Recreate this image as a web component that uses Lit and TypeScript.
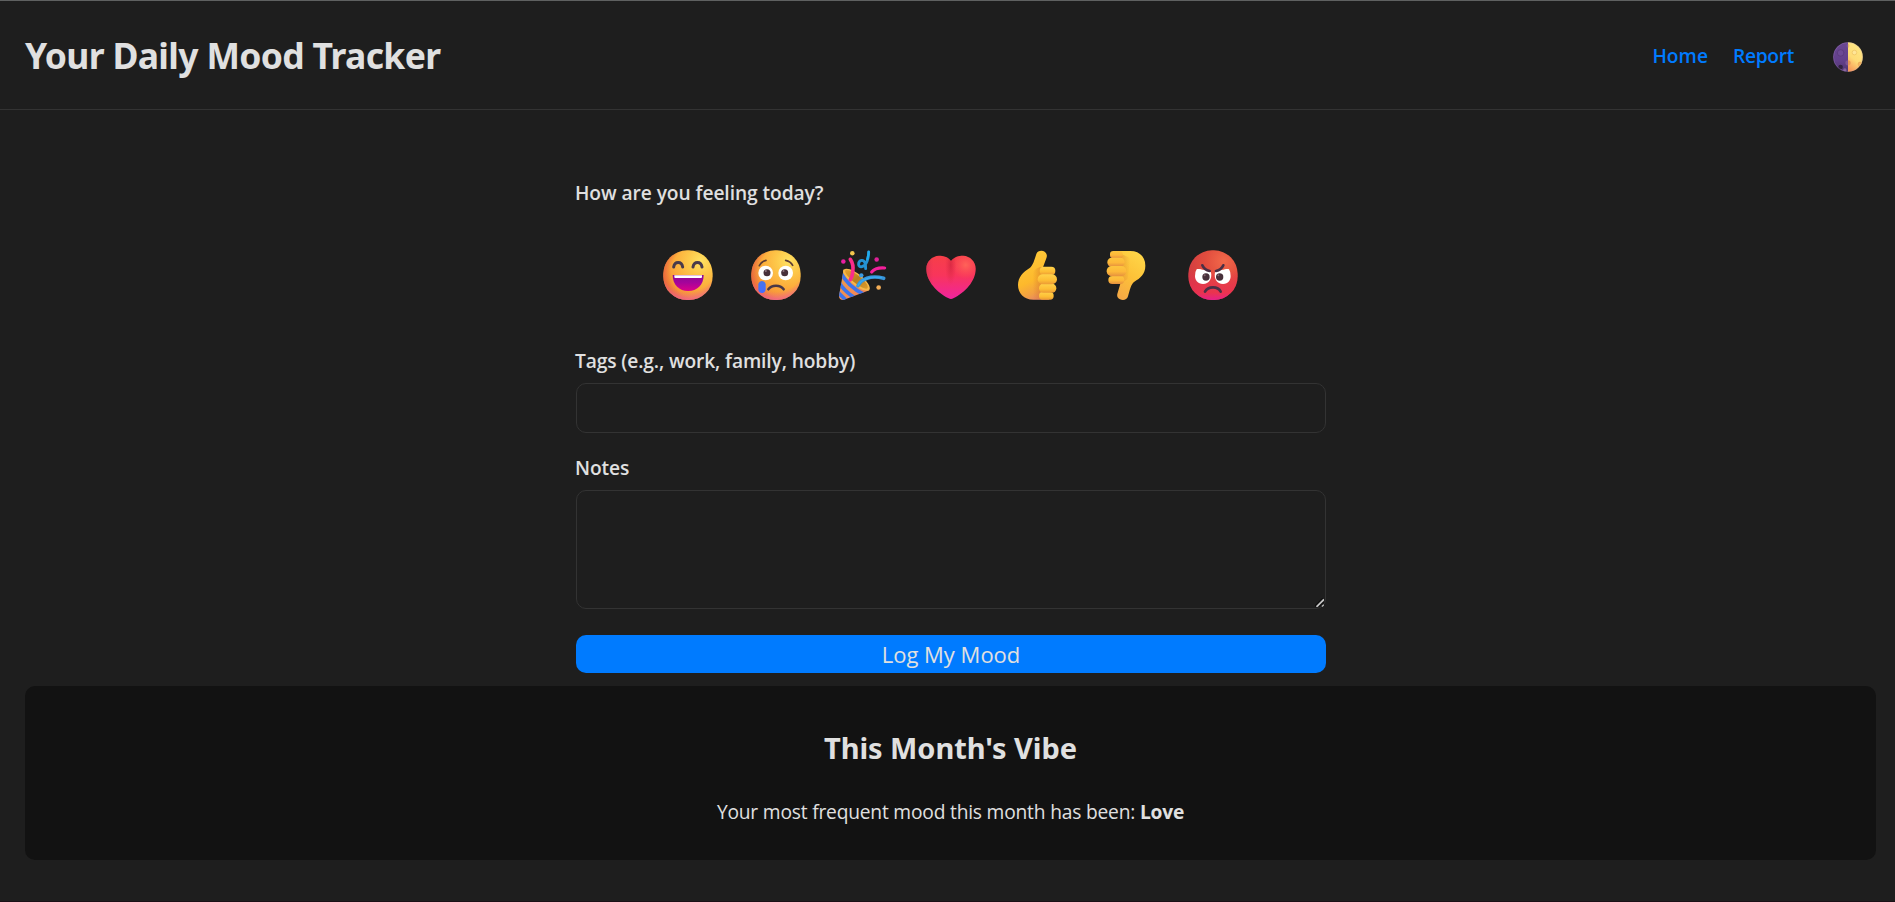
import { LitElement, html, svg, css } from "lit";
import { customElement } from "lit/decorators.js";

const faceBase = (id: string, cx: number) => svg`
  <defs>
    <radialGradient id="${id}-a" gradientUnits="userSpaceOnUse" cx="${cx + 38}" cy="78" r="125">
      <stop offset="0" stop-color="#ffe262"/><stop offset=".3" stop-color="#fdc84a"/>
      <stop offset=".62" stop-color="#fcae3c"/><stop offset="1" stop-color="#f48a38"/>
    </radialGradient>
    <radialGradient id="${id}-b" gradientUnits="userSpaceOnUse" cx="${cx}" cy="82" r="122">
      <stop offset=".72" stop-color="#f2628a" stop-opacity="0"/><stop offset="1" stop-color="#ee5fa6"/>
    </radialGradient>
    <radialGradient id="${id}-c" gradientUnits="userSpaceOnUse" cx="${cx + 26}" cy="112" r="104">
      <stop offset=".74" stop-color="#ea6a3c" stop-opacity="0"/><stop offset="1" stop-color="#e8623f"/>
    </radialGradient>
  </defs>
  <rect x="${cx - 74}" y="46" width="148" height="149" rx="71" fill="url(#${id}-a)"/>
  <rect x="${cx - 74}" y="46" width="148" height="149" rx="71" fill="url(#${id}-c)"/>
  <rect x="${cx - 74}" y="46" width="148" height="149" rx="71" fill="url(#${id}-b)"/>`;

const happy = svg`<svg viewBox="40 45 150 150">
  ${faceBase("hp", 115)}
  <defs><linearGradient id="hp-m" x1="0" y1="0" x2="0" y2="1"><stop offset="0" stop-color="#8a0b91"/><stop offset=".45" stop-color="#a3049b"/><stop offset="1" stop-color="#dc008a"/></linearGradient></defs>
  <g fill="none" stroke="#493a4b" stroke-width="9" stroke-linecap="round">
    <path d="M72 96C75 78 96 78 99 96"/><path d="M130 96C133 78 154 78 157 96"/>
  </g>
  <path d="M69 120H162C162 150 142 168 115.500 168S69 150 69 120Z" fill="url(#hp-m)"/>
  <path d="M74 120.500H157V126Q157 129 154 129H77Q74 129 74 126Z" fill="#fff"/>
</svg>`;

const sad = svg`<svg viewBox="302 45 150 150">
  ${faceBase("sd", 377)}
  <defs><linearGradient id="sd-t" x1="0" y1="0" x2="0" y2="1"><stop offset="0" stop-color="#4775e8"/><stop offset="1" stop-color="#456bff"/></linearGradient></defs>
  <g fill="none" stroke="#5d3d35" stroke-width="5" stroke-linecap="round"><path d="M327 92Q333 79 347 76"/><path d="M406 76Q421 79 427 91"/></g>
  <circle cx="346" cy="114" r="22" fill="#fff"/><circle cx="406" cy="114" r="22" fill="#fff"/>
  <circle cx="350" cy="113" r="10.500" fill="#47303a"/><circle cx="403" cy="113" r="10.500" fill="#47303a"/>
  <circle cx="346.500" cy="108" r="3" fill="#8f7680"/><circle cx="399.500" cy="108" r="3" fill="#8f7680"/>
  <path d="M354 163Q362 152 377 152T400 163" fill="none" stroke="#493847" stroke-width="7.500" stroke-linecap="round"/>
  <path d="M324 148C324 142 330 138 335 138S346 142 346 148V163C346 170 341 174 335 174S324 170 324 163Z" fill="url(#sd-t)"/>
</svg>`;

const party = svg`<svg viewBox="54 45 150 150">
  <defs>
    <linearGradient id="pt-c" x1="0" y1="0" x2="1" y2="1"><stop offset="0" stop-color="#e8a24a"/><stop offset=".6" stop-color="#f28a52"/><stop offset="1" stop-color="#dd7b66"/></linearGradient>
    <linearGradient id="pt-i" x1="0" y1="0" x2="1" y2="1"><stop offset="0" stop-color="#e8a32c"/><stop offset=".5" stop-color="#b97d20"/><stop offset="1" stop-color="#dd9c2c"/></linearGradient>
    <clipPath id="pt-k"><path d="M71 103L57 183Q57 195 70 195L148 166Z"/></clipPath>
  </defs>
  <path d="M71 103L57 183Q57 195 70 195L148 166Z" fill="url(#pt-c)"/>
  <g clip-path="url(#pt-k)" fill="none" stroke="#3b74ec" stroke-width="11">
    <path d="M62 112Q84 155 132 178"/><path d="M54 137Q71 169 108 191"/><path d="M52 170Q62 180 82 200"/>
  </g>
  <path d="M71 104C80 96 105 106 127 126S153 161 147 166S116 162 95 143S65 109 71 104Z" fill="#f6b84b"/>
  <path d="M76 106C85 102 104 111 123 128S146 155 142 160S115 153 98 138S72 110 76 106Z" fill="url(#pt-i)"/>
  <path d="M91 73Q102 88 98 112Q97 125 91 134" fill="none" stroke="#fb2c8b" stroke-width="11" stroke-linecap="round"/>
  <path d="M114 152C123 133 151 119 191 130" fill="none" stroke="#3795da" stroke-width="11" stroke-linecap="round"/>
  <path d="M114 152C123 133 151 123 184 128" fill="none" stroke="#3aaaf0" stroke-width="4" stroke-linecap="round"/>
  <path d="M155 111Q166 97 194 99" fill="none" stroke="#f3209b" stroke-width="9.500" stroke-linecap="round"/>
  <path d="M146 51C146 70 140 91 126 95C112 98 113 78 125 76C136 75 137 90 137 101" fill="none" stroke="#2493d5" stroke-width="8.500" stroke-linecap="round" stroke-linejoin="round"/>
  <path d="M146 51Q145 63 142 72" fill="none" stroke="#20aced" stroke-width="7" stroke-linecap="round"/>
  <circle cx="97" cy="54.500" r="6.800" fill="#f4c64d"/><circle cx="70" cy="79.500" r="6.800" fill="#e81fa0"/>
  <circle cx="170" cy="73.500" r="6.800" fill="#df2098"/><circle cx="124" cy="121" r="6.500" fill="#3b9ae2"/>
  <circle cx="176" cy="157.500" r="7" fill="#f4ae57"/>
</svg>`;

const heartPath = "M392 78C382 64 368 62 356 62C335 63 318 79 318 101C318 139 350 172 385 190Q392 194 399 190C434 172 466 139 466 101C466 79 449 63 428 62C415 62 402 65 392 78Z";
const love = svg`<svg viewBox="317 45 150 150">
  <defs>
    <linearGradient id="lv-a" x1="0" y1="0" x2="0" y2="1"><stop offset="0" stop-color="#f63f48"/><stop offset=".45" stop-color="#f8355b"/><stop offset="1" stop-color="#f0249f"/></linearGradient>
    <radialGradient id="lv-b" gradientUnits="userSpaceOnUse" cx="436" cy="90" r="42"><stop offset="0" stop-color="#ff6358"/><stop offset="1" stop-color="#ff5058" stop-opacity="0"/></radialGradient>
    <radialGradient id="lv-c" gradientUnits="userSpaceOnUse" cx="0" cy="0" r="1" gradientTransform="translate(391 90) scale(17 60)"><stop offset="0" stop-color="#c8203c" stop-opacity=".6"/><stop offset="1" stop-color="#d8243f" stop-opacity="0"/></radialGradient>
    <linearGradient id="lv-d" x1="0" y1="0" x2="1" y2="0"><stop offset="0" stop-color="#c9304e" stop-opacity=".55"/><stop offset=".14" stop-color="#d93050" stop-opacity="0"/></linearGradient>
  </defs>
  ${["a", "b", "c", "d"].map((k) => svg`<path d="${heartPath}" fill="url(#lv-${k})"/>`)}
</svg>`;

const like = svg`<svg viewBox="39 45 150 150">
  <defs>
    <linearGradient id="lk-a" x1=".3" y1="0" x2=".6" y2="1"><stop offset="0" stop-color="#ffcb3a"/><stop offset=".6" stop-color="#fdb92c"/><stop offset=".85" stop-color="#f2a043"/><stop offset="1" stop-color="#e88765"/></linearGradient>
    <linearGradient id="lk-f" x1="0" y1="0" x2="0" y2="1"><stop offset="0" stop-color="#ffd24a"/><stop offset=".6" stop-color="#fdbd35"/><stop offset="1" stop-color="#eb9a35"/></linearGradient>
    <linearGradient id="lk-s" x1="0" y1="0" x2="1" y2="0"><stop offset="0" stop-color="#d87b28" stop-opacity="0"/><stop offset="1" stop-color="#d87b28" stop-opacity=".65"/></linearGradient>
  </defs>
  <path d="M109 57C112 47 126 45 134 50C141 55 142 63 139 70L129 97L134 110L147 194H100C72 194 54 175 54 150C54 127 70 111 88 100C99 93 104 72 109 57Z" fill="url(#lk-a)"/>
  <path d="M98 112Q110 96 126 96L128 192H100Z" fill="url(#lk-s)"/>
  <rect x="119" y="95" width="47" height="25" rx="12" fill="url(#lk-f)"/>
  <rect x="117" y="171" width="44" height="23" rx="11" fill="url(#lk-f)"/>
  <rect x="117" y="146" width="52" height="27" rx="13" fill="url(#lk-f)"/>
  <rect x="113" y="118" width="58" height="30" rx="15" fill="url(#lk-f)"/>
</svg>`;

const dislike = svg`<svg viewBox="302 45 150 150">
  <defs>
    <linearGradient id="dl-a" x1=".8" y1="0" x2=".3" y2="1"><stop offset="0" stop-color="#ffd749"/><stop offset=".5" stop-color="#fdc238"/><stop offset="1" stop-color="#f6a945"/></linearGradient>
    <linearGradient id="dl-f" x1="0" y1="0" x2="0" y2="1"><stop offset="0" stop-color="#fdc53e"/><stop offset=".55" stop-color="#fdb83a"/><stop offset="1" stop-color="#e58f3e"/></linearGradient>
    <linearGradient id="dl-s" x1="0" y1="0" x2="1" y2="0"><stop offset="0" stop-color="#dd8a30" stop-opacity=".6"/><stop offset="1" stop-color="#dd8a30" stop-opacity="0"/></linearGradient>
  </defs>
  <path d="M340 48H390C418 48 435 66 435 92C435 117 420 129 402 140C392 147 388 166 383 184C380 195 368 197 359 193C350 188 349 181 352 173L360 146L352 134Z" fill="url(#dl-a)"/>
  <path d="M362 56L390 70L382 132L358 148Z" fill="url(#dl-s)"/>
  <rect x="329" y="48" width="38" height="22" rx="10" fill="url(#dl-f)"/>
  <rect x="324" y="123" width="48" height="24" rx="12" fill="url(#dl-f)"/>
  <rect x="321" y="68" width="52" height="27" rx="13" fill="url(#dl-f)"/>
  <rect x="319" y="93" width="59" height="31" rx="15" fill="url(#dl-f)"/>
</svg>`;

const angry = svg`<svg viewBox="564 45 150 150">
  <defs>
    <radialGradient id="an-a" gradientUnits="userSpaceOnUse" cx="672" cy="78" r="125"><stop offset="0" stop-color="#f2694a"/><stop offset=".45" stop-color="#e24d3e"/><stop offset="1" stop-color="#cf3842"/></radialGradient>
    <linearGradient id="an-b" x1="0" y1="0" x2="0" y2="1"><stop offset=".4" stop-color="#ee2c58" stop-opacity="0"/><stop offset=".85" stop-color="#ef3152" stop-opacity=".8"/><stop offset="1" stop-color="#e61f8c"/></linearGradient>
  </defs>
  <rect x="565" y="46" width="148" height="149" rx="71" fill="url(#an-a)"/>
  <rect x="565" y="46" width="148" height="149" rx="71" fill="url(#an-b)"/>
  <path d="M590 103C595 100 620 107 633 112C637 132 627 147 609 147C593 147 585 135 585 123Q585 110 590 103Z" fill="#fff"/>
  <path d="M687 103C682 100 657 107 645 112C641 132 651 147 669 147C685 147 692 135 692 123Q692 110 687 103Z" fill="#fff"/>
  <circle cx="618" cy="126" r="11" fill="#47303a"/><circle cx="659" cy="126" r="11" fill="#47303a"/>
  <circle cx="614" cy="121" r="3" fill="#80646e"/><circle cx="655" cy="121" r="3" fill="#80646e"/>
  <g fill="none" stroke="#493046" stroke-width="8" stroke-linecap="round"><path d="M607 91Q613 105 629 108"/><path d="M670 91Q664 105 648 108"/><path d="M615 170Q622 157 639 157T662 170"/></g>
</svg>`;

const moon = svg`<svg viewBox="609 125 91 91">
  <defs>
    <linearGradient id="mn-d" x1="0" y1="0" x2="0" y2="1"><stop offset="0" stop-color="#6a4792"/><stop offset=".6" stop-color="#63408c"/><stop offset="1" stop-color="#50356f"/></linearGradient>
    <linearGradient id="mn-l" x1=".7" y1="0" x2=".3" y2="1"><stop offset="0" stop-color="#ffe985"/><stop offset=".6" stop-color="#fedb76"/><stop offset="1" stop-color="#f79a59"/></linearGradient>
    <clipPath id="mn-k"><circle cx="654.500" cy="170.500" r="45"/></clipPath>
  </defs>
  <g clip-path="url(#mn-k)">
    <path d="M609 125H654.500V216H609Z" fill="url(#mn-d)"/><path d="M654.500 125H700V216H654.500Z" fill="url(#mn-l)"/>
    <circle cx="632" cy="158" r="10" fill="#6d4a95" stroke="#573776" stroke-width="2"/>
    <circle cx="632" cy="201" r="7" fill="#30213f"/><circle cx="645" cy="210" r="5" fill="#81609b"/>
    <path d="M654.500 130A7 7 0 0 1 654.500 143Z" fill="#e9ba67"/><path d="M654.500 130A7 7 0 0 0 654.500 143Z" fill="#7c5798"/>
    <path d="M654.500 180A8 8 0 0 1 654.500 196Z" fill="#e79a57"/><path d="M654.500 180A8 8 0 0 0 654.500 196Z" fill="#7d5495"/>
    <circle cx="674" cy="157" r="7" fill="#ffe698" stroke="#edc062" stroke-width="2"/>
    <circle cx="691" cy="192" r="6" fill="#f7b65d" stroke="#dd9a4e" stroke-width="1.500"/>
  </g>
  <circle cx="654.500" cy="170.500" r="44" fill="none" stroke="#b79acb" stroke-opacity=".35" stroke-width="2"/>
</svg>`;

const grip = svg`<svg viewBox="0 0 9 9">
  <path d="M0 8.500L8 .5" stroke="#0c0c0c" stroke-width="1.800"/>
  <path d="M1.500 8.800L9 1.300" stroke="#c4c4c4" stroke-width="1.900"/>
  <path d="M4 9L9 4" stroke="#111" stroke-width="1.200"/>
  <path d="M7 8.500L8.800 6.700" stroke="#b4b4b4" stroke-width="1.400"/>
</svg>`;

@customElement("app-root")
export class AppRoot extends LitElement {
  private moods = [
    ["Happy", happy], ["Sad", sad], ["Excited", party], ["Love", love],
    ["Good", like], ["Bad", dislike], ["Angry", angry],
  ] as const;

  static styles = css`
    :host {
      display: block; box-sizing: border-box; height: 902px; overflow: hidden;
      background: #1e1e1e; color: #e0e0e0;
      border-top: 1px solid #5f6161; border-bottom: 1px solid #1a1016;
      font: 400 19.2px/30px "Open Sans", "Noto Sans", sans-serif;
    }
    * { box-sizing: border-box; }
    svg { display: block; width: 100%; height: 100%; }
    button { border: 0; padding: 0; background: none; color: inherit; font: inherit; cursor: pointer; }
    .header {
      display: flex; align-items: center; justify-content: space-between;
      height: 109px; padding: 0 32px 0 25px; border-bottom: 1px solid #333;
    }
    .title { margin: 0; font: 700 35.5px/54px "Noto Sans", sans-serif; letter-spacing: -0.67px; }
    .nav { display: flex; align-items: center; }
    .link { color: #007bff; font-weight: 600; text-decoration: none; margin-right: 25px; padding-top: 2px; }
    .report { letter-spacing: -0.3px; margin-right: 39px; }
    .theme { width: 30px; height: 30px; margin-top: 4px; }
    .form { display: flex; flex-direction: column; width: 750px; margin: 68px 0 0 576px; }
    .label { font-weight: 600; letter-spacing: -0.07px; margin-left: -1px; }
    .tags { letter-spacing: -0.12px; }
    .moods { display: flex; justify-content: center; gap: 37.5px; margin: 42px 1px 46px 0; }
    .mood { width: 50px; height: 50px; }
    .field {
      display: block; width: 100%; padding: 12px; border: 1px solid #333;
      border-radius: 10px; background: #1e1e1e; color: inherit; font: inherit; outline: 0;
    }
    .input { height: 50px; margin: 7px 0 20px; }
    .notes { position: relative; margin: 7px 0 26px; }
    .area { height: 119px; resize: none; }
    .grip { position: absolute; right: 2px; bottom: 2px; width: 9px; height: 9px; pointer-events: none; }
    .submit { height: 38px; border-radius: 10px; background: #007bff; font-size: 22px; line-height: 38px; }
    .card {
      height: 174px; margin: 13px 19px 0 25px; padding-top: 42px; border-radius: 10px;
      background: #121212; text-align: center;
    }
    .subtitle { margin: 0 0 29px; font: 700 29px/40px "Noto Sans", sans-serif; letter-spacing: -0.05px; }
    .summary { margin: 0; letter-spacing: -0.19px; }
  `;

  render() {
    return html`
      <header class="header">
        <h1 class="title">Your Daily Mood Tracker</h1>
        <nav class="nav">
          <a class="link" href="#">Home</a>
          <a class="link report" href="#">Report</a>
          <button class="theme" aria-label="Toggle theme">${moon}</button>
        </nav>
      </header>
      <main>
        <form class="form" @submit=${(e: Event) => e.preventDefault()}>
          <label class="label">How are you feeling today?</label>
          <div class="moods">
            ${this.moods.map(([name, icon]) => html`<button type="button" class="mood" aria-label=${name}>${icon}</button>`)}
          </div>
          <label class="label tags" for="tags">Tags (e.g., work, family, hobby)</label>
          <input class="field input" id="tags" />
          <label class="label" for="notes">Notes</label>
          <div class="notes">
            <textarea class="field area" id="notes"></textarea>
            <span class="grip">${grip}</span>
          </div>
          <button class="submit">Log My Mood</button>
        </form>
        <section class="card">
          <h2 class="subtitle">This Month's Vibe</h2>
          <p class="summary">Your most frequent mood this month has been: <strong>Love</strong></p>
        </section>
      </main>
    `;
  }
}
